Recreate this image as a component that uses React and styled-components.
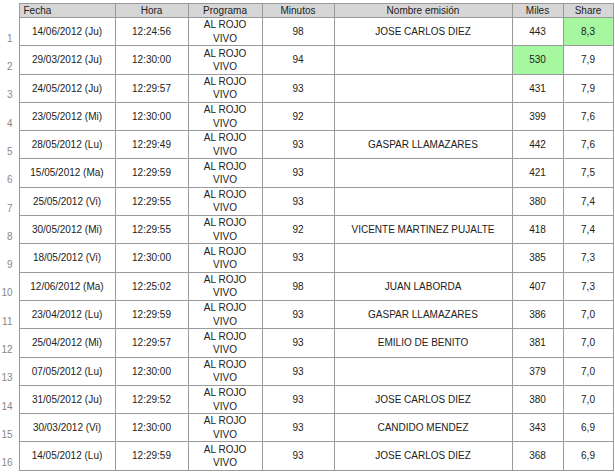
import React from 'react'
import styled, { createGlobalStyle } from 'styled-components'

const GlobalStyle = createGlobalStyle`
  body {
    margin: 0;
    background: #ffffff;
    font-family: "Liberation Sans", Arial, sans-serif;
  }
`

const rows = [
  ['14/06/2012 (Ju)', '12:24:56', 98, 'JOSE CARLOS DIEZ', 443, '8,3', 'share'],
  ['29/03/2012 (Ju)', '12:30:00', 94, '', 530, '7,9', 'miles'],
  ['24/05/2012 (Ju)', '12:29:57', 93, '', 431, '7,9'],
  ['23/05/2012 (Mi)', '12:30:00', 92, '', 399, '7,6'],
  ['28/05/2012 (Lu)', '12:29:49', 93, 'GASPAR LLAMAZARES', 442, '7,6'],
  ['15/05/2012 (Ma)', '12:29:59', 93, '', 421, '7,5'],
  ['25/05/2012 (Vi)', '12:29:55', 93, '', 380, '7,4'],
  ['30/05/2012 (Mi)', '12:29:55', 92, 'VICENTE MARTINEZ PUJALTE', 418, '7,4'],
  ['18/05/2012 (Vi)', '12:30:00', 93, '', 385, '7,3'],
  ['12/06/2012 (Ma)', '12:25:02', 98, 'JUAN LABORDA', 407, '7,3'],
  ['23/04/2012 (Lu)', '12:29:59', 93, 'GASPAR LLAMAZARES', 386, '7,0'],
  ['25/04/2012 (Mi)', '12:29:57', 93, 'EMILIO DE BENITO', 381, '7,0'],
  ['07/05/2012 (Lu)', '12:30:00', 93, '', 379, '7,0'],
  ['31/05/2012 (Ju)', '12:29:52', 93, 'JOSE CARLOS DIEZ', 380, '7,0'],
  ['30/03/2012 (Vi)', '12:30:00', 93, 'CANDIDO MENDEZ', 343, '6,9'],
  ['14/05/2012 (Lu)', '12:29:59', 93, 'JOSE CARLOS DIEZ', 368, '6,9'],
]

const Page = styled.div`
  padding-top: 3px;
`

const Table = styled.table`
  border-collapse: collapse;
  table-layout: fixed;
  width: 613px;
  font-size: 10px;
  color: #222;
`

const HeadCell = styled.th`
  height: 13px;
  padding: 0 4px;
  background: #d6d6d6;
  border: 1px solid #9a9a9a;
  font-weight: normal;
  line-height: 13px;
  text-align: ${p => (p.$left ? 'left' : 'center')};
  color: #222;
`

const Blank = styled.th`
  border: none;
  background: transparent;
`

const Row = styled.tr`
  height: 28.3px;
`

const Num = styled.td`
  border: none;
  padding: 0 6px 1px 0;
  text-align: right;
  vertical-align: bottom;
  color: #888;
  font-size: 10px;
  line-height: 13px;
`

const Cell = styled.td`
  border: 1px solid #9a9a9a;
  padding: 0 8px;
  text-align: center;
  vertical-align: middle;
  line-height: 13.4px;
  background: ${p => (p.$hit ? '#a6f7a0' : '#fff')};
`

export default function App() {
  return (
    <Page>
      <GlobalStyle />
      <Table>
        <colgroup>
          <col style={{ width: 19 }} />
          <col style={{ width: 96 }} />
          <col style={{ width: 73 }} />
          <col style={{ width: 74 }} />
          <col style={{ width: 72 }} />
          <col style={{ width: 178 }} />
          <col style={{ width: 51 }} />
          <col style={{ width: 50 }} />
        </colgroup>
        <thead>
          <tr>
            <Blank />
            <HeadCell $left>Fecha</HeadCell>
            <HeadCell>Hora</HeadCell>
            <HeadCell>Programa</HeadCell>
            <HeadCell>Minutos</HeadCell>
            <HeadCell>Nombre emisión</HeadCell>
            <HeadCell>Miles</HeadCell>
            <HeadCell>Share</HeadCell>
          </tr>
        </thead>
        <tbody>
          {rows.map((r, i) => (
            <Row key={i}>
              <Num>{i + 1}</Num>
              <Cell>{r[0]}</Cell>
              <Cell>{r[1]}</Cell>
              <Cell>AL ROJO VIVO</Cell>
              <Cell>{r[2]}</Cell>
              <Cell>{r[3]}</Cell>
              <Cell $hit={r[6] === 'miles'}>{r[4]}</Cell>
              <Cell $hit={r[6] === 'share'}>{r[5]}</Cell>
            </Row>
          ))}
        </tbody>
      </Table>
    </Page>
  )
}
